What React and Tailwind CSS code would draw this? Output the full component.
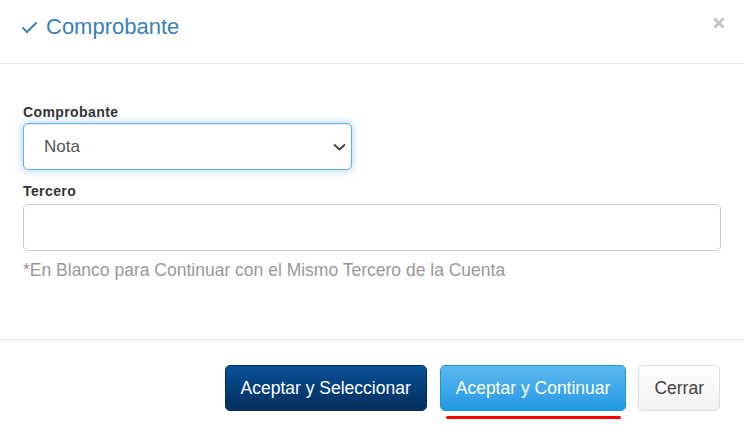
export default function App() {
  return (
    <div className="w-[744px] h-[444px] bg-white flex flex-col font-['Liberation_Sans',Arial,sans-serif] overflow-hidden">
      {/* Header */}
      <div className="h-[64px] flex-shrink-0 border-b border-[#e5e5e5] flex items-start justify-between pl-[21px] pr-[19px] pt-[15px]">
        <div className="flex items-center gap-[8px]">
          <svg width="17" height="13" viewBox="0 0 17 13" className="mt-[1px]">
            <path d="M1.5 6.5 L6 11 L15.5 1.5" fill="none" stroke="#3a80b4" strokeWidth="2" />
          </svg>
          <span className="text-[22px] leading-[24px] text-[#3a80b4]">Comprobante</span>
        </div>
        <button className="mt-[2px]" title="Cerrar">
          <svg width="12" height="12" viewBox="0 0 12 12">
            <path d="M1.5 1.5 L10.5 10.5 M10.5 1.5 L1.5 10.5" stroke="#c4c4c4" strokeWidth="3" />
          </svg>
        </button>
      </div>

      {/* Body */}
      <div className="h-[275px] flex-shrink-0 px-[23px] pt-[40px]">
        <label className="block text-[14px] leading-[16px] font-bold tracking-[0.4px] text-[#333] mb-[3px]">
          Comprobante
        </label>
        <div className="relative w-[329px]">
          <select
            defaultValue="Nota"
            className="appearance-none w-full h-[47px] border border-[#66afe9] rounded-[5px] bg-white pl-[20px] pr-[30px] text-[17px] text-[#555] outline-none shadow-[inset_0_1px_1px_rgba(0,0,0,0.075),0_0_8px_rgba(102,175,233,0.6)]"
          >
            <option>Nota</option>
          </select>
          <svg
            width="13"
            height="8"
            viewBox="0 0 13 8"
            className="absolute right-[6px] top-[20px] pointer-events-none"
          >
            <path d="M1 1.5 L6.5 6.5 L12 1.5" fill="none" stroke="#444" strokeWidth="2" />
          </svg>
        </div>

        <label className="block mt-[13px] text-[14px] leading-[16px] font-bold tracking-[0.4px] text-[#333] mb-[5px]">
          Tercero
        </label>
        <input
          type="text"
          className="block w-full h-[47px] border border-[#ccc] rounded-[5px] px-[12px] text-[17px] text-[#555] outline-none"
        />
        <p className="mt-[9px] text-[17.5px] leading-[20px] text-[#999]">
          *En Blanco para Continuar con el Mismo Tercero de la Cuenta
        </p>
      </div>

      {/* Footer */}
      <div className="flex-1 border-t border-[#e5e5e5] flex items-start justify-end pt-[25px] pr-[24px]">
        <button className="h-[46px] px-[15px] rounded-[5px] border border-[#022c57] bg-linear-to-b from-[#0b5199] to-[#022f5d] text-white text-[17.5px] leading-[20px]">
          Aceptar y Seleccionar
        </button>
        <div className="relative ml-[13px]">
          <button className="h-[46px] px-[15px] rounded-[5px] border border-[#2196dd] bg-linear-to-b from-[#5bb7ef] to-[#1f99e4] text-white text-[17.5px] leading-[20px]">
            Aceptar y Continuar
          </button>
          <div className="absolute left-[6px] right-[5px] top-[51px] h-[3px] rounded-full bg-[#f00]" />
        </div>
        <button className="ml-[12px] h-[46px] px-[15px] rounded-[5px] border border-[#ddd] bg-linear-to-b from-white to-[#f2f2f2] text-[#444] text-[17.5px] leading-[20px]">
          Cerrar
        </button>
      </div>
    </div>
  );
}
